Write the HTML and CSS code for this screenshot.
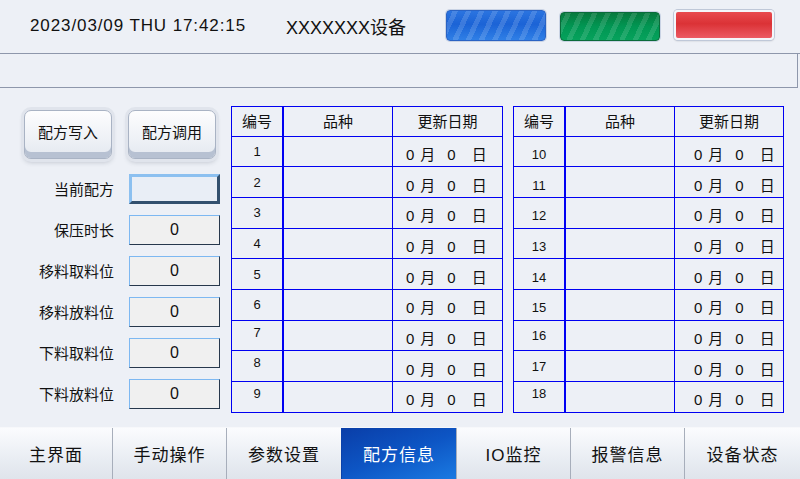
FILE: index.html
```html
<!DOCTYPE html>
<html>
  <head>
    <meta charset="utf-8">
    <link rel="stylesheet" href="styles.css">
  </head>
  <body>
    <header class="top">
      <span class="clock">2023/03/09 THU 17:42:15</span>
      <span class="title">XXXXXXX设备</span>
      <div class="lamps">
        <span class="lamp blue"></span>
        <span class="lamp green"></span>
        <span class="lamp red"></span>
      </div>
    </header>
    <div class="band"></div>

    <main>
      <div class="panel">
        <div class="actions">
          <button class="btn">配方写入</button>
          <button class="btn">配方调用</button>
        </div>
        <div class="fields">
          <label>当前配方</label><span class="box current"></span>
          <label>保压时长</label><span class="box">0</span>
          <label>移料取料位</label><span class="box">0</span>
          <label>移料放料位</label><span class="box">0</span>
          <label>下料取料位</label><span class="box">0</span>
          <label>下料放料位</label><span class="box">0</span>
        </div>
      </div>

      <table class="recipes first">
        <tr class="head"><th class="no">编号</th><th class="kind">品种</th><th>更新日期</th></tr>
        <tr><td class="no">1</td><td></td><td class="date"><span>0</span><span>月</span><span>0</span><span>日</span></td></tr>
        <tr><td class="no">2</td><td></td><td class="date"><span>0</span><span>月</span><span>0</span><span>日</span></td></tr>
        <tr><td class="no">3</td><td></td><td class="date"><span>0</span><span>月</span><span>0</span><span>日</span></td></tr>
        <tr><td class="no">4</td><td></td><td class="date"><span>0</span><span>月</span><span>0</span><span>日</span></td></tr>
        <tr><td class="no">5</td><td></td><td class="date"><span>0</span><span>月</span><span>0</span><span>日</span></td></tr>
        <tr><td class="no">6</td><td></td><td class="date"><span>0</span><span>月</span><span>0</span><span>日</span></td></tr>
        <tr><td class="no up">7</td><td></td><td class="date"><span>0</span><span>月</span><span>0</span><span>日</span></td></tr>
        <tr><td class="no up">8</td><td></td><td class="date"><span>0</span><span>月</span><span>0</span><span>日</span></td></tr>
        <tr><td class="no up">9</td><td></td><td class="date"><span>0</span><span>月</span><span>0</span><span>日</span></td></tr>
      </table>

      <table class="recipes second">
        <tr class="head"><th class="no">编号</th><th class="kind">品种</th><th>更新日期</th></tr>
        <tr><td class="no down">10</td><td></td><td class="date"><span>0</span><span>月</span><span>0</span><span>日</span></td></tr>
        <tr><td class="no down">11</td><td></td><td class="date"><span>0</span><span>月</span><span>0</span><span>日</span></td></tr>
        <tr><td class="no down">12</td><td></td><td class="date"><span>0</span><span>月</span><span>0</span><span>日</span></td></tr>
        <tr><td class="no down">13</td><td></td><td class="date"><span>0</span><span>月</span><span>0</span><span>日</span></td></tr>
        <tr><td class="no down">14</td><td></td><td class="date"><span>0</span><span>月</span><span>0</span><span>日</span></td></tr>
        <tr><td class="no down">15</td><td></td><td class="date"><span>0</span><span>月</span><span>0</span><span>日</span></td></tr>
        <tr><td class="no">16</td><td></td><td class="date"><span>0</span><span>月</span><span>0</span><span>日</span></td></tr>
        <tr><td class="no">17</td><td></td><td class="date"><span>0</span><span>月</span><span>0</span><span>日</span></td></tr>
        <tr><td class="no up">18</td><td></td><td class="date"><span>0</span><span>月</span><span>0</span><span>日</span></td></tr>
      </table>
    </main>

    <nav class="tabs">
      <a>主界面</a>
      <a>手动操作</a>
      <a>参数设置</a>
      <a class="active">配方信息</a>
      <a>IO监控</a>
      <a>报警信息</a>
      <a>设备状态</a>
    </nav>
  </body>
</html>
```

FILE: styles.css
```css
body {
  margin: 0;
  width: 800px;
  height: 479px;
  overflow: hidden;
  background-color: #edf0f6;
  color: #111;
  font-family: "Liberation Sans", "Noto Sans CJK SC", sans-serif;
  display: flex;
  flex-direction: column;
}

/* top bar: clock, machine name, status lamps */
.top {
  height: 53px;
  border-bottom: 1px solid #8e97ab;
  display: flex;
  align-items: center;
}

.clock {
  margin-left: 30px;
  font-size: 17px;
  letter-spacing: 0.9px;
  width: 256px;
}

.title {
  font-size: 18px;
  width: 160px;
}

.lamps {
  display: flex;
  align-items: center;
  gap: 14px;
}

.lamp {
  display: block;
  width: 100px;
  height: 30px;
  border-radius: 4px;
  box-sizing: border-box;
}

.lamp.blue {
  margin-top: -2px;
  height: 31px;
  border: 1px solid #2a63c4;
  background:
    repeating-linear-gradient(-65deg, rgba(255,255,255,0) 0 7px, rgba(255,255,255,.14) 7px 12px),
    linear-gradient(#2b74e0, #1b63d6 45%, #2f7fe6);
  box-shadow: 0 0 0 1px #c9d3e4;
}

.lamp.green {
  height: 29px;
  border: 1px solid #0b6b3a;
  background:
    repeating-linear-gradient(-65deg, rgba(255,255,255,0) 0 7px, rgba(255,255,255,.12) 7px 12px),
    linear-gradient(#077a3e, #019653 50%, #06a25c);
  box-shadow: 0 0 0 1px #c9d3e4;
}

.lamp.red {
  margin-top: -2px;
  border: 2px solid #f4f6fa;
  background: linear-gradient(#e84a4e, #db3236 45%, #ec5a63);
  box-shadow: 0 0 0 1px #bfc8d8, 0 1px 2px rgba(0,0,0,.2);
}

.band {
  height: 33px;
  border-bottom: 1px solid #8e97ab;
  border-right: 1px solid #8e97ab;
  margin-right: 2px;
}

/* recipe page body */
main {
  height: 322px;
  padding-top: 18px;
  display: flex;
  align-items: flex-start;
}

.panel {
  width: 231px;
  flex: none;
}

.actions {
  display: flex;
  gap: 16px;
  margin: 4px 0 0 24px;
}

.btn {
  width: 88px;
  height: 49px;
  padding: 0 0 6px;
  border: 1px solid #a9b3c4;
  border-radius: 7px;
  background: linear-gradient(#fdfdfe, #eef1f6 60%, #e3e8ef);
  box-shadow: inset 0 -6px 0 #b7c1d2, 0 0 0 3px #e0e4ec, 0 3px 5px rgba(60,70,90,.3);
  font-family: inherit;
  font-size: 15px;
  color: #111;
}

.fields {
  display: grid;
  grid-template-columns: 114px 91px;
  column-gap: 15px;
  row-gap: 11px;
  margin-top: 15px;
  align-items: center;
}

.fields label {
  text-align: right;
  font-size: 15px;
}

.box {
  height: 30px;
  box-sizing: border-box;
  border: 1px solid;
  border-color: #7db8f2 #27384c #27384c #7db8f2;
  background-color: #f0f0f0;
  font-size: 16px;
  text-align: center;
  line-height: 28px;
}

.box.current {
  border-width: 3px;
  border-color: #8cc0f0 #33506e #33506e #8cc0f0;
  background-color: #e9eef6;
}

/* recipe tables */
.recipes {
  border-collapse: collapse;
  height: 307px;
  table-layout: fixed;
  font-size: 15px;
}

.recipes.first {
  width: 272px;
}

.recipes.second {
  width: 271px;
  margin-left: 10px;
}

.recipes th,
.recipes td {
  border: 1px solid #0000f2;
  padding: 0;
  font-weight: normal;
  text-align: center;
}

.recipes .head {
  height: 30px;
}

.recipes .head th {
  padding-bottom: 2px;
}

.recipes .no {
  width: 50px;
  border-right-width: 2px;
}

.recipes td.no {
  font-size: 13px;
}

.recipes .kind {
  width: 108px;
}

.recipes .no.up {
  padding-bottom: 7px;
}

.recipes .no.down {
  padding-top: 6px;
}

.recipes .date {
  text-align: left;
  padding: 4px 0 0 13px;
}

.second .date {
  padding-left: 19px;
}

.date span + span {
  margin-left: 6px;
}

.date span:nth-child(3) {
  margin-left: 12px;
}

.date span:nth-child(4) {
  margin-left: 16px;
}

/* bottom navigation */
.tabs {
  height: 51px;
  display: grid;
  grid-template-columns: 112px 114px 115px 115px 114px 114px 1fr;
  border-top: 1px solid #f7f8fb;
}

.tabs a {
  display: flex;
  align-items: center;
  justify-content: center;
  font-size: 17px;
  letter-spacing: 1px;
  background: linear-gradient(#fbfcfe, #e9edf3 60%, #dfe4eb);
  border-left: 1px solid #a7aebb;
}

.tabs a:first-child {
  border-left: none;
}

.tabs a.active {
  color: #fff;
  border-left-color: #0b42aa;
  background: linear-gradient(160deg, #0a3ea8, #0d55c4 50%, #1a7ae2);
}
```
